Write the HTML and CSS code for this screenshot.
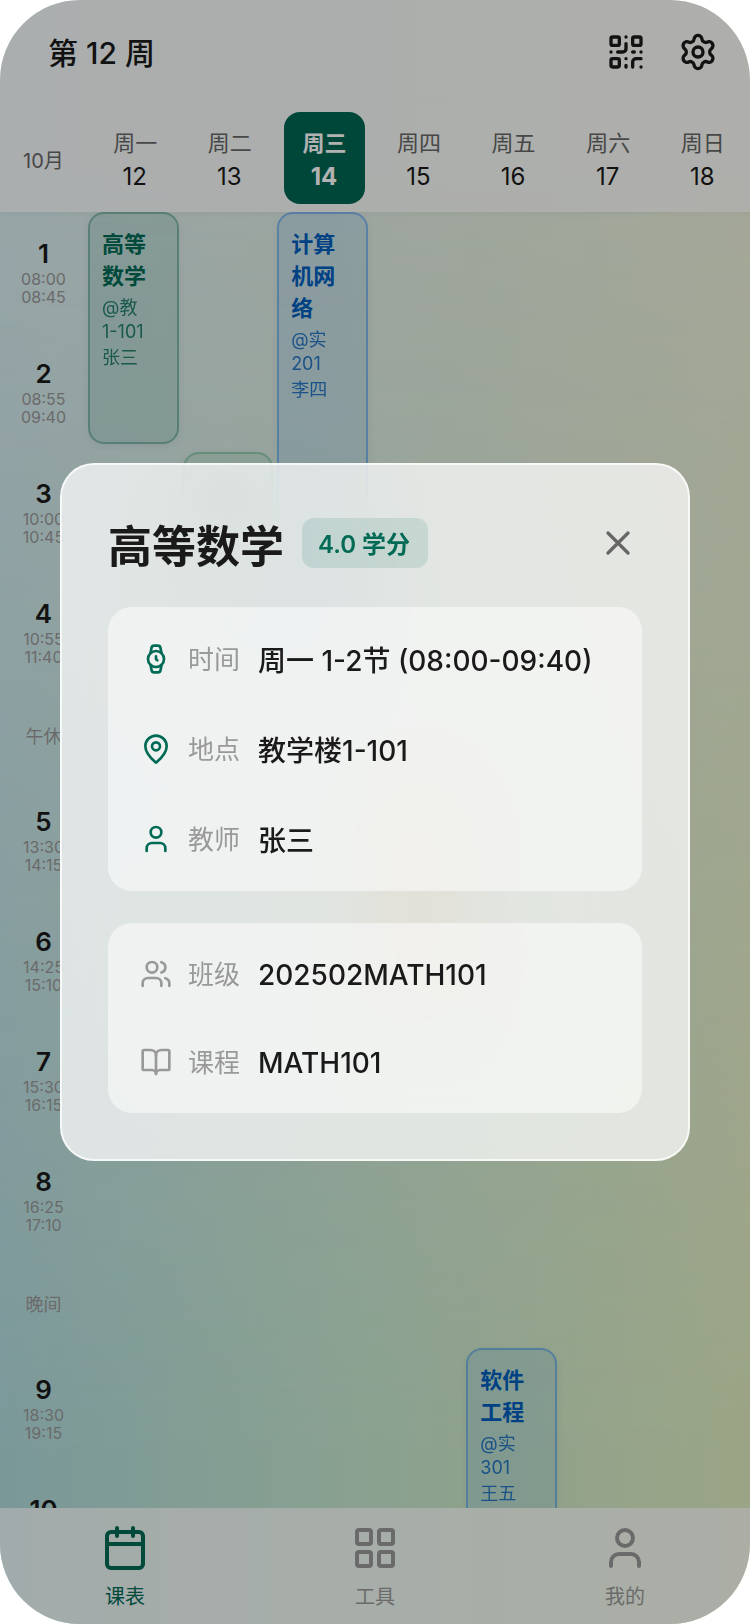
FILE: index.html
```html
<!DOCTYPE html>
<html lang="zh-CN">
<head>
<meta charset="utf-8">
<title>课表</title>
<link rel="stylesheet" href="styles.css">
</head>
<body>
<div class="app">
  <header class="topbar">
    <h1 class="week-title">第 12 周</h1>
    <div class="actions">
      <svg class="icon icon-md" viewBox="0 0 24 24"><rect x="3" y="3" width="5" height="5" rx="1"/><rect x="16" y="3" width="5" height="5" rx="1"/><rect x="3" y="16" width="5" height="5" rx="1"/><path d="M21 16h-3a2 2 0 0 0-2 2v3M21 21v.01M12 7v3a2 2 0 0 1-2 2H7M3 12h.01M12 3h.01M12 16v.01M16 12h1M21 12v.01M12 21v-1"/></svg>
      <svg class="icon icon-md" viewBox="0 0 24 24"><path d="M9.671 4.136a2.34 2.34 0 0 1 4.659 0 2.34 2.34 0 0 0 3.319 1.915 2.34 2.34 0 0 1 2.33 4.033 2.34 2.34 0 0 0 0 3.831 2.34 2.34 0 0 1-2.33 4.033 2.34 2.34 0 0 0-3.319 1.915 2.34 2.34 0 0 1-4.659 0 2.34 2.34 0 0 0-3.32-1.915 2.34 2.34 0 0 1-2.33-4.033 2.34 2.34 0 0 0 0-3.831A2.34 2.34 0 0 1 6.35 6.051a2.34 2.34 0 0 0 3.319-1.915"/><circle cx="12" cy="12" r="3"/></svg>
    </div>
  </header>

  <div class="days">
    <div class="month">10月</div>
    <div class="day"><span class="day-name">周一</span><span class="day-num">12</span></div>
    <div class="day"><span class="day-name">周二</span><span class="day-num">13</span></div>
    <div class="day today"><span class="day-name">周三</span><span class="day-num">14</span></div>
    <div class="day"><span class="day-name">周四</span><span class="day-num">15</span></div>
    <div class="day"><span class="day-name">周五</span><span class="day-num">16</span></div>
    <div class="day"><span class="day-name">周六</span><span class="day-num">17</span></div>
    <div class="day"><span class="day-name">周日</span><span class="day-num">18</span></div>
  </div>

  <main class="schedule">
    <div class="times">
      <div class="period"><b>1</b><span>08:00</span><span>08:45</span></div>
      <div class="period"><b>2</b><span>08:55</span><span>09:40</span></div>
      <div class="period"><b>3</b><span>10:00</span><span>10:45</span></div>
      <div class="period"><b>4</b><span>10:55</span><span>11:40</span></div>
      <div class="break">午休</div>
      <div class="period"><b>5</b><span>13:30</span><span>14:15</span></div>
      <div class="period"><b>6</b><span>14:25</span><span>15:10</span></div>
      <div class="period"><b>7</b><span>15:30</span><span>16:15</span></div>
      <div class="period"><b>8</b><span>16:25</span><span>17:10</span></div>
      <div class="break">晚间</div>
      <div class="period"><b>9</b><span>18:30</span><span>19:15</span></div>
      <div class="period"><b>10</b></div>
    </div>
    <div class="courses">
      <article class="course teal mon-1"><h3>高等<br>数学</h3><p>@教<br>1-101</p><p>张三</p></article>
      <article class="course green tue-3"></article>
      <article class="course blue wed-1"><h3>计算<br>机网<br>络</h3><p>@实<br>201</p><p>李四</p></article>
      <article class="course orange thu-5"></article>
      <article class="course blue fri-9"><h3>软件<br>工程</h3><p>@实<br>301</p><p>王五</p></article>
    </div>
  </main>

  <nav class="tabs">
    <a class="tab active">
      <svg class="icon icon-lg" viewBox="0 0 24 24"><path d="M8 2v4M16 2v4"/><rect x="3" y="4" width="18" height="18" rx="2"/><path d="M3 10h18"/></svg>
      <span>课表</span>
    </a>
    <a class="tab">
      <svg class="icon icon-lg" viewBox="0 0 24 24"><rect x="3" y="3" width="7" height="7" rx="1"/><rect x="14" y="3" width="7" height="7" rx="1"/><rect x="14" y="14" width="7" height="7" rx="1"/><rect x="3" y="14" width="7" height="7" rx="1"/></svg>
      <span>工具</span>
    </a>
    <a class="tab">
      <svg class="icon icon-lg" viewBox="0 0 24 24"><path d="M19 21v-2a4 4 0 0 0-4-4H9a4 4 0 0 0-4 4v2"/><circle cx="12" cy="7" r="4"/></svg>
      <span>我的</span>
    </a>
  </nav>

  <div class="overlay">
    <section class="modal">
      <div class="modal-head">
        <h2>高等数学</h2>
        <span class="badge">4.0 学分</span>
        <svg class="icon icon-md close" viewBox="0 0 24 24"><path d="M18 6 6 18M6 6l12 12"/></svg>
      </div>
      <div class="card primary">
        <div class="row">
          <svg class="icon icon-sm" viewBox="0 0 24 24"><circle cx="12" cy="12" r="6"/><path d="M12 10v2l1 1"/><path d="m16.13 7.66-.81-4.05a2 2 0 0 0-2-1.61h-2.68a2 2 0 0 0-2 1.61l-.78 4.05M7.88 16.36l.8 4a2 2 0 0 0 2 1.61h2.72a2 2 0 0 0 2-1.61l.81-4.05"/></svg>
          <span class="label">时间</span><span class="value">周一 1-2节 (08:00-09:40)</span>
        </div>
        <div class="row">
          <svg class="icon icon-sm" viewBox="0 0 24 24"><path d="M20 10c0 4.993-5.539 10.193-7.399 11.799a1 1 0 0 1-1.202 0C9.539 20.193 4 14.993 4 10a8 8 0 0 1 16 0"/><circle cx="12" cy="10" r="3"/></svg>
          <span class="label">地点</span><span class="value">教学楼1-101</span>
        </div>
        <div class="row">
          <svg class="icon icon-sm" viewBox="0 0 24 24"><path d="M19 21v-2a4 4 0 0 0-4-4H9a4 4 0 0 0-4 4v2"/><circle cx="12" cy="7" r="4"/></svg>
          <span class="label">教师</span><span class="value">张三</span>
        </div>
      </div>
      <div class="card secondary">
        <div class="row">
          <svg class="icon icon-sm" viewBox="0 0 24 24"><path d="M16 21v-2a4 4 0 0 0-4-4H6a4 4 0 0 0-4 4v2"/><circle cx="9" cy="7" r="4"/><path d="M22 21v-2a4 4 0 0 0-3-3.87M16 3.13a4 4 0 0 1 0 7.75"/></svg>
          <span class="label">班级</span><span class="value">202502MATH101</span>
        </div>
        <div class="row">
          <svg class="icon icon-sm" viewBox="0 0 24 24"><path d="M12 7v14"/><path d="M3 18a1 1 0 0 1-1-1V4a1 1 0 0 1 1-1h5a4 4 0 0 1 4 4 4 4 0 0 1 4-4h5a1 1 0 0 1 1 1v13a1 1 0 0 1-1 1h-6a3 3 0 0 0-3 3 3 3 0 0 0-3-3z"/></svg>
          <span class="label">课程</span><span class="value">MATH101</span>
        </div>
      </div>
    </section>
  </div>
</div>
</body>
</html>
```

FILE: styles.css
```css
* { box-sizing: border-box; margin: 0; padding: 0; }

body {
  background: #fff;
  font-family: Inter, "Noto Sans CJK SC", sans-serif;
  color: #1a1a1a;
}

.app {
  position: relative;
  width: 750px;
  height: 1624px;
  display: flex;
  flex-direction: column;
  overflow: hidden;
  border-radius: 80px;
  isolation: isolate;
  background: linear-gradient(90deg, #dbeef1, #e2eee5 45%, #ecf1dc);
}

/* lower, more saturated half of the backdrop */
.app::before {
  content: "";
  position: absolute;
  inset: 0;
  z-index: -1;
  background: linear-gradient(90deg, #b0dadc, #b8e0d6 20%, #c6e7ce 50%, #deecbf);
  -webkit-mask-image: linear-gradient(180deg, transparent 10%, #000 90%);
  mask-image: linear-gradient(180deg, transparent 10%, #000 90%);
}

.icon { fill: none; stroke: currentColor; stroke-width: 2; stroke-linecap: round; stroke-linejoin: round; flex: none; }
.icon-sm { width: 32px; height: 32px; }
.icon-md { width: 40px; height: 40px; }
.icon-lg { width: 48px; height: 48px; }

.topbar {
  height: 104px;
  flex: none;
  display: flex;
  align-items: center;
  justify-content: space-between;
  padding: 0 32px 0 48px;
  background: rgba(255, 255, 255, .72);
}
.week-title { font-size: 30px; font-weight: 500; line-height: 40px; padding-top: 2px; }
.actions { display: flex; gap: 32px; }

.days {
  height: 108px;
  flex: none;
  display: grid;
  grid-template-columns: 88px repeat(7, 1fr);
  padding: 8px 0;
  background: rgba(255, 255, 255, .72);
  box-shadow: 0 2px 6px rgba(0, 0, 0, .04);
}
.month { align-self: center; text-align: center; font-size: 20px; color: #666; padding: 2px 1px 0 0; }
.day {
  display: flex;
  flex-direction: column;
  align-items: center;
  justify-content: center;
  margin: 0 7px;
  padding-top: 5px;
  border-radius: 16px;
}
.day-name { font-size: 22px; line-height: 33px; color: #666; }
.day-num { font-size: 24px; line-height: 34px; margin-right: 1px; }
.today { background: #006652; color: #fff; font-weight: 700; }
.today .day-name { color: #fff; font-weight: 600; }

.schedule { flex: 1; min-height: 0; display: flex; overflow: hidden; }
.times { width: 88px; padding-right: 1px; flex: none; }
.period {
  height: 120px;
  display: flex;
  flex-direction: column;
  align-items: center;
  padding-top: 26px;
  font-size: 16px;
  line-height: 18px;
  color: #999;
}
.period b { font-size: 26px; line-height: 32px; font-weight: 600; color: #1a1a1a; }
.break { height: 88px; line-height: 90px; text-align: center; font-size: 18px; color: #999; }

.courses {
  flex: 1;
  display: grid;
  grid-template-columns: repeat(7, 1fr);
  grid-template-rows: repeat(4, 120px) 88px repeat(4, 120px) 88px repeat(2, 120px);
}
.course {
  --tone: 0, 106, 85;
  margin: 0 4px 8px 0;
  padding: 14px 12px 12px;
  border: 2px solid rgba(var(--tone), .32);
  border-radius: 16px;
  background: rgba(var(--tone), .12);
  box-shadow: 0 2px 8px rgba(0, 0, 0, .06);
  color: rgb(var(--tone));
}
.course h3 { font-size: 22px; line-height: 32px; font-weight: 700; margin-bottom: 4px; }
.course p { font-size: 18px; line-height: 24px; margin-bottom: 2px; opacity: .8; }
.green { --tone: 40, 150, 95; }
.blue { --tone: 0, 94, 190; background: rgba(30, 130, 240, .12); border-color: rgba(20, 125, 245, .4); }
.orange { --tone: 240, 120, 20; background: rgba(240, 130, 20, .28); }
.mon-1 { grid-area: 1 / 1 / 3 / 2; }
.tue-3 { grid-area: 3 / 2 / 5 / 3; background: radial-gradient(circle at 45% 24%, rgba(30, 110, 70, .5), rgba(40, 150, 95, .1) 22%); }
.wed-1 { grid-area: 1 / 3 / 5 / 4; }
.thu-5 { grid-area: 6 / 4 / 8 / 5; }
.fri-9 { grid-area: 11 / 5 / 13 / 6; }

.tabs {
  height: 116px;
  flex: none;
  display: grid;
  grid-template-columns: repeat(3, 1fr);
  background: rgba(255, 255, 255, .72);
}
.tab {
  display: flex;
  flex-direction: column;
  align-items: center;
  gap: 10px;
  padding-top: 16px;
  font-size: 20px;
  line-height: 30px;
  color: #999;
}
.tab.active { color: #006a55; }

.overlay {
  position: absolute;
  inset: 0;
  display: flex;
  align-items: center;
  justify-content: center;
  background: rgba(0, 0, 0, .3);
}
.modal {
  width: 630px;
  height: 698px;
  padding: 46px;
  display: flex;
  flex-direction: column;
  border: 2px solid rgba(255, 255, 255, .75);
  border-radius: 34px;
  background: rgba(255, 255, 255, .72);
  backdrop-filter: blur(40px);
}
.modal-head { height: 64px; display: flex; align-items: center; margin-bottom: 32px; }
.modal-head h2 { font-size: 44px; line-height: 64px; font-weight: 700; padding-top: 7px; }
.badge {
  margin-left: 18px;
  width: 126px;
  height: 50px;
  padding: 3px 0 0 16px;
  border-radius: 12px;
  background: rgba(0, 106, 85, .12);
  color: #006a55;
  font-size: 24px;
  line-height: 48px;
  font-weight: 600;
  white-space: nowrap;
}
.close { margin-left: auto; margin-right: 4px; color: #666; }

.card { border-radius: 24px; background: rgba(255, 255, 255, .5); padding: 7px 32px; }
.card + .card { margin-top: 32px; }
.row { height: 90px; display: flex; align-items: center; gap: 16px; }
.secondary .row { height: 88px; }
.primary .icon { color: #006a55; }
.secondary .icon { color: #999; }
.label { font-size: 26px; line-height: 38px; color: #999; padding-top: 1px; }
.value { font-size: 28px; line-height: 40px; font-weight: 500; margin-left: 2px; padding-top: 2px; }
.primary .value { padding-top: 3px; }
```
